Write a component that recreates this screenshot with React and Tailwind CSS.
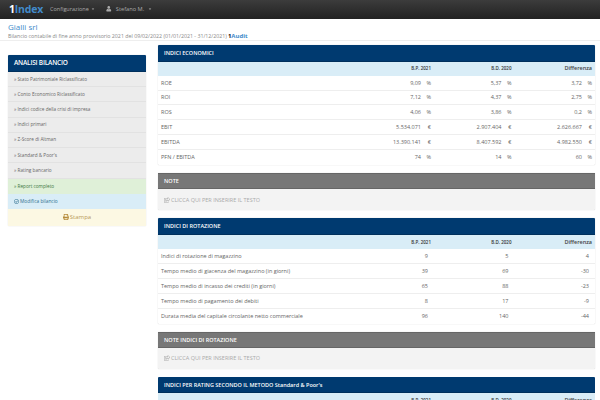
import { FaPrint, FaUser, FaRegCheckCircle, FaCaretDown, FaRegShareSquare } from "react-icons/fa";

const sidebarItems = [
    "Stato Patrimoniale Riclassificato",
    "Conto Economico Riclassificato",
    "Indici codice della crisi di impresa",
    "Indici primari",
    "Z-Score di Altman",
    "Standard & Poor's",
    "Rating bancario",
];

const economici = [
    ["ROE", "9,09", "5,37", "3,72", "%"],
    ["ROI", "7,12", "4,37", "2,75", "%"],
    ["ROS", "4,06", "3,86", "0,2", "%"],
    ["EBIT", "5.534.071", "2.907.404", "2.626.667", "€"],
    ["EBITDA", "13.390.141", "8.407.592", "4.982.550", "€"],
    ["PFN / EBITDA", "74", "14", "60", "%"],
];

const rotazione = [
    ["Indici di rotazione di magazzino", "9", "5", "4"],
    ["Tempo medio di giacenza del magazzino (in giorni)", "39", "69", "-30"],
    ["Tempo medio di incasso dei crediti (in giorni)", "65", "88", "-23"],
    ["Tempo medio di pagamento dei debiti", "8", "17", "-9"],
    ["Durata media del capitale circolante netto commerciale", "96", "140", "-44"],
];

function PanelHeader({ children }) {
    return (
        <div className="h-[16.5px] flex items-center pl-[6px] bg-[#003a70] border-b border-[#00305c] rounded-t-[1px] text-white text-[5.5px] font-semibold">
            {children}
        </div>
    );
}

function TableHead() {
    return (
        <div className="h-[14.2px] grid grid-cols-[1fr_80px_80.5px_80.5px] items-center bg-[#d9edf7] text-[#333] text-right">
            <div />
            <div className="pr-[3px] text-[4.5px] font-semibold">B.P. 2021</div>
            <div className="pr-[3px] text-[4.5px] font-semibold">B.D. 2020</div>
            <div className="pr-[3px] text-[5.5px] font-semibold text-[#444]">Differenza</div>
        </div>
    );
}

function EconomiciPanel() {
    return (
        <section className="bg-white rounded-[1px] shadow-[0_0_1px_rgba(0,0,0,0.3)]">
            <PanelHeader>INDICI ECONOMICI</PanelHeader>
            <TableHead />
            {economici.map((row) => (
                <div key={row[0]} className="h-[14.9px] grid grid-cols-[1fr_80px_80.5px_80.5px] items-center border-b border-[#eee] last:border-b-0 text-[5.5px] text-[#666] text-right">
                    <div className="pl-[3px] text-left">{row[0]}</div>
                    {row.slice(1, 4).map((val, i) => (
                        <div key={i} className="pr-[3px]">{val}<span className="inline-block w-[10px] text-right">{row[4]}</span></div>
                    ))}
                </div>
            ))}
        </section>
    );
}

function RotazionePanel() {
    return (
        <section className="bg-white rounded-[1px] shadow-[0_0_1px_rgba(0,0,0,0.3)]">
            <PanelHeader>INDICI DI ROTAZIONE</PanelHeader>
            <TableHead />
            {rotazione.map((row) => (
                <div key={row[0]} className="h-[14.9px] grid grid-cols-[1fr_80px_80.5px_80.5px] items-center border-b border-[#eee] last:border-b-0 text-[5.5px] text-[#666] text-right">
                    <div className="pl-[3px] text-left">{row[0]}</div>
                    <div className="pr-[6px]">{row[1]}</div>
                    <div className="pr-[6px]">{row[2]}</div>
                    <div className="pr-[6px]">{row[3]}</div>
                </div>
            ))}
        </section>
    );
}

function NotePanel({ title }) {
    return (
        <section className="rounded-[1px] bg-[#f3f3f3] shadow-[0_0_1px_rgba(0,0,0,0.25)]">
            <div className="h-[16px] flex items-center pl-[6px] bg-[#777] border-t border-[#666] border-b-[#666] border-b text-white text-[5.5px] font-semibold">
                {title}
            </div>
            <div className="h-[21px] flex items-center pl-[6px] gap-[1px] text-[5.5px] text-[#aaa]">
                <FaRegShareSquare className="w-[6px] h-[6px]" />
                CLICCA QUI PER INSERIRE IL TESTO
            </div>
        </section>
    );
}

export default function App() {
    return (
        <div className="w-[600px] h-[400px] overflow-hidden bg-white font-['Open_Sans',sans-serif]">
            {/* Navbar */}
            <nav className="h-[18.5px] flex items-center pl-[9px] bg-gradient-to-b from-[#3c3c3c] to-[#222]">
                <div className="w-[41px] text-[10.5px] font-bold leading-none tracking-[-0.2px]">
                    <span className="text-white">1</span>
                    <span className="text-[#428bca]">Index</span>
                </div>
                <div className="flex items-center gap-[2.5px] text-[5.5px] text-[#aaa]">
                    Configurazione
                    <FaCaretDown className="w-[4px] h-[4px]" />
                </div>
                <div className="ml-[11px] flex items-center gap-[4px] text-[5.7px] text-[#aaa]">
                    <FaUser className="w-[5.5px] h-[5.5px]" />
                    Stefano M.
                    <FaCaretDown className="w-[4px] h-[4px]" />
                </div>
            </nav>

            {/* Page title */}
            <header className="h-[22.5px] pl-[8px] pt-[3px] border-b border-[#eee]">
                <div className="text-[8px] leading-[10px] text-[#428bca]">Gialli srl</div>
                <div className="flex items-center text-[5.27px] leading-[8px] text-[#888]">
                    Bilancio contabile di fine anno provvisorio 2021 del 09/02/2022 (01/01/2021 - 31/12/2021)
                    <span className="ml-[1px] text-[6px] font-bold"><span className="text-[#111]">1</span><span className="text-[#428bca]">Audit</span></span>
                </div>
            </header>

            <div className="flex items-start gap-[12px] pl-[8px] pr-[5px]">
                {/* Sidebar */}
                <aside className="w-[138px] mt-[14.3px] shrink-0 rounded-[1px] shadow-[0_0_1px_rgba(0,0,0,0.25)]">
                    <div className="h-[16.7px] flex items-center pl-[6px] bg-[#003a70] border-b border-[#00305c] rounded-t-[1px] text-white text-[6.5px] font-semibold tracking-[-0.2px]">
                        ANALISI BILANCIO
                    </div>
                    {sidebarItems.map((item) => (
                        <div key={item} className="h-[15.23px] flex items-center pl-[6px] bg-[#ececec] border-b border-[#e2e2e2] text-[4.7px] text-[#666]">
                            » {item}
                        </div>
                    ))}
                    <div className="h-[15.4px] flex items-center pl-[6px] bg-[#dff0d8] text-[4.7px] text-[#3c763d]">» Report completo</div>
                    <div className="h-[15.3px] flex items-center pl-[6px] gap-[1px] bg-[#d9edf7] text-[4.8px] text-[#31708f]">
                        <FaRegCheckCircle className="w-[5px] h-[5px]" />
                        Modifica bilancio
                    </div>
                    <div className="h-[16.3px] flex items-center justify-center gap-[1px] bg-[#fcf8e3] text-[6px] text-[#b8995a]">
                        <FaPrint className="w-[6px] h-[6px] text-[#b58a3a]" />
                        Stampa
                    </div>
                </aside>

                {/* Main content */}
                <main className="flex-1 mt-[4px] flex flex-col gap-[8.2px]">
                    <EconomiciPanel />
                    <NotePanel title="NOTE" />
                    <RotazionePanel />
                    <NotePanel title="NOTE INDICI DI ROTAZIONE" />
                    <section>
                        <PanelHeader>INDICI PER RATING SECONDO IL METODO Standard & Poor's</PanelHeader>
                        <TableHead />
                    </section>
                </main>
            </div>
        </div>
    );
}
